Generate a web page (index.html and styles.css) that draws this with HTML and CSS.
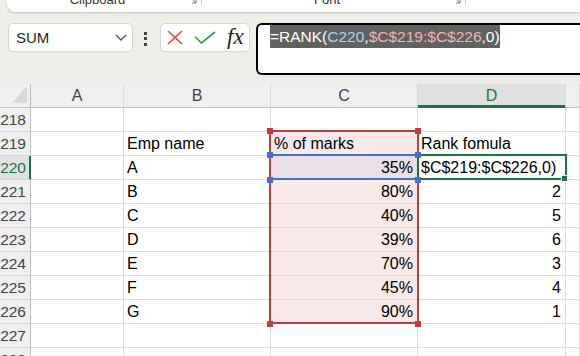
FILE: index.html
```html
<!DOCTYPE html>
<html>
<head>
<meta charset="utf-8">
<link rel="stylesheet" href="styles.css">
</head>
<body>
<div class="ribbon">
  <div class="group g1">
    <span class="glabel">Clipboard</span>
    <svg class="launch" viewBox="0 0 9 9"><polyline points="1,4 1,1 4,1" /><line x1="2.5" y1="2.5" x2="8" y2="8" /><polyline points="8,4 8,8 4,8" /></svg>
  </div>
  <div class="sep"></div>
  <div class="group g2">
    <span class="glabel">Font</span>
    <svg class="launch" viewBox="0 0 9 9"><polyline points="1,4 1,1 4,1" /><line x1="2.5" y1="2.5" x2="8" y2="8" /><polyline points="8,4 8,8 4,8" /></svg>
  </div>
  <div class="sep"></div>
</div>

<div class="fbar">
  <div class="namebox">
    <span>SUM</span>
    <svg class="chev" viewBox="0 0 12 7"><polyline points="1,1 6,6 11,1" /></svg>
  </div>
  <div class="dots"><i></i><i></i><i></i></div>
  <div class="btns">
    <svg class="xicon" viewBox="0 0 16 15"><line x1="1" y1="1" x2="15" y2="14" /><line x1="15" y1="1" x2="1" y2="14" /></svg>
    <svg class="check" viewBox="0 0 22 13"><polyline points="1,5.5 7.5,12 21,1" /></svg>
    <span class="fx">fx</span>
  </div>
  <div class="finput">
    <span class="ftext">=RANK(<span class="ref1">C220</span>,<span class="ref2">$C$219:$C$226</span>,0)</span>
  </div>
</div>

<div class="sheet">
  <div class="ch corner"><svg viewBox="0 0 30 23"><polygon points="12,19 27,19 27,2" /></svg></div>
  <div class="ch">A</div><div class="ch">B</div><div class="ch">C</div><div class="ch chsel">D</div><div class="ch"></div>

  <div class="rh">218</div><div class="c"></div><div class="c"></div><div class="c"></div><div class="c"></div><div class="c"></div>

  <div class="rh">219</div><div class="c"></div><div class="c">Emp name</div><div class="c pink">% of marks</div><div class="c">Rank fomula</div><div class="c"></div>

  <div class="rh rhsel">220</div><div class="c"></div><div class="c">A</div><div class="c lav r">35%</div><div class="c">$C$219:$C$226,0)</div><div class="c"></div>

  <div class="rh">221</div><div class="c"></div><div class="c">B</div><div class="c pink r">80%</div><div class="c r">2</div><div class="c"></div>

  <div class="rh">222</div><div class="c"></div><div class="c">C</div><div class="c pink r">40%</div><div class="c r">5</div><div class="c"></div>

  <div class="rh">223</div><div class="c"></div><div class="c">D</div><div class="c pink r">39%</div><div class="c r">6</div><div class="c"></div>

  <div class="rh">224</div><div class="c"></div><div class="c">E</div><div class="c pink r">70%</div><div class="c r">3</div><div class="c"></div>

  <div class="rh">225</div><div class="c"></div><div class="c">F</div><div class="c pink r">45%</div><div class="c r">4</div><div class="c"></div>

  <div class="rh">226</div><div class="c"></div><div class="c">G</div><div class="c pink r">90%</div><div class="c r">1</div><div class="c"></div>

  <div class="rh">227</div><div class="c"></div><div class="c"></div><div class="c"></div><div class="c"></div><div class="c"></div>

  <div class="rh">228</div><div class="c"></div><div class="c"></div><div class="c"></div><div class="c"></div><div class="c"></div>

  <div class="range"></div>
  <div class="refbox"></div>
  <div class="active"></div>

  <div class="hd red h-tl"></div>
  <div class="hd red h-tr"></div>
  <div class="hd red h-bl"></div>
  <div class="hd red h-br"></div>
  <div class="hd blue b-tl"></div>
  <div class="hd blue b-tr"></div>
  <div class="hd blue b-bl"></div>
  <div class="hd blue b-br"></div>
  <div class="hd green g-br"></div>
</div>
</body>
</html>
```

FILE: styles.css
```css
* { box-sizing: border-box; }
html, body { margin: 0; padding: 0; }
body {
  width: 580px;
  height: 356px;
  overflow: hidden;
  background: #eeeee9;
  font-family: "Liberation Sans", Arial, sans-serif;
}

/* ribbon remnant */
.ribbon {
  display: flex;
  height: 12px;
  margin-left: 7px;
  background: #fff;
  border-radius: 0 0 0 8px;
  box-shadow: 0 1px 2px rgba(0, 0, 0, 0.18);
  overflow: hidden;
}
.group { display: flex; align-items: flex-start; }
.g1 { width: 194px; }
.g2 { width: 263px; }
.glabel {
  flex: 1;
  text-align: center;
  font-size: 13px;
  line-height: 13px;
  margin-top: -7px;
  color: #333;
  white-space: nowrap;
}
.launch {
  width: 9px;
  height: 9px;
  margin-top: -5px;
  margin-right: 4px;
  fill: none;
  stroke: #777;
  stroke-width: 1;
}
.sep { width: 1px; height: 5px; background: #c8c8c8; }

/* formula bar */
.fbar {
  display: flex;
  align-items: flex-start;
  margin: 11px 0 0 8px;
}
.namebox {
  width: 125px;
  height: 29px;
  background: #fff;
  border: 1px solid #d6d6d6;
  border-radius: 5px;
  display: flex;
  align-items: center;
  justify-content: space-between;
  padding: 0 5px 0 7px;
  font-size: 15px;
  color: #1f1f1f;
}
.chev {
  width: 12px;
  height: 7px;
  fill: none;
  stroke: #555;
  stroke-width: 1.3;
}
.dots {
  display: flex;
  flex-direction: column;
  gap: 2.5px;
  margin: 8.5px 0 0 11px;
}
.dots i { display: block; width: 3px; height: 3px; background: #444; }
.btns {
  width: 90px;
  height: 29px;
  margin-left: 13px;
  background: #fff;
  border: 1px solid #d6d6d6;
  border-radius: 5px;
  display: flex;
  align-items: center;
  padding-left: 6px;
}
.xicon {
  width: 16px;
  height: 15px;
  fill: none;
  stroke: #e5484d;
  stroke-width: 1.7;
}
.check {
  width: 22px;
  height: 13px;
  margin-left: 11px;
  fill: none;
  stroke: #3a9a50;
  stroke-width: 1.7;
}
.fx {
  margin-left: 11px;
  font-family: "Liberation Serif", "Times New Roman", serif;
  font-style: italic;
  font-size: 23px;
  line-height: 22px;
  color: #222;
  margin-top: -2px;
}
.finput {
  flex: 1;
  margin-left: 6px;
  height: 52px;
  background: #fff;
  border: 2px solid #000;
  border-right: 0;
  border-radius: 6px 0 0 6px;
  padding-left: 12px;
}
.ftext {
  display: inline-block;
  background: #616161;
  color: #fff;
  font-size: 15.5px;
  line-height: 23px;
  white-space: nowrap;
}
.ref1 { color: #a9d3f2; }
.ref2 { color: #f2b3b3; }

/* sheet */
.sheet {
  position: relative;
  margin-top: 9px;
  display: grid;
  grid-template-columns: 31px 93px 147px 147px 148px 14px;
  grid-auto-rows: 24px;
}
.ch, .rh, .c {
  border-right: 1px solid #dadada;
  border-bottom: 1px solid #dadada;
  font-size: 16px;
  line-height: 23px;
  white-space: nowrap;
}
.ch {
  background: #efefef;
  border-bottom-color: #c2c2c2;
  text-align: center;
  color: #444;
}
.corner { border-right-color: #bdbdbd; }
.corner svg { display: block; width: 30px; height: 23px; fill: #d9d9d9; }
.chsel {
  background: #e0e0e0;
  color: #1e7145;
  border-bottom-color: #1e7145;
  box-shadow: inset 0 -2px 0 #1e7145;
}
.rh {
  background: #efefef;
  border-right-color: #bdbdbd;
  border-bottom-color: #d6d6d6;
  text-align: right;
  padding-right: 4px;
  font-size: 15.5px;
  color: #444;
}
.rhsel {
  background: #e1e1e1;
  color: #1e7145;
  border-right-color: #1e7145;
  box-shadow: inset -1px 0 0 #1e7145;
}
.c {
  background: #fff;
  padding: 0 3px;
  color: #000;
}
.c.r { text-align: right; padding-right: 4px; }
.c.pink { background: #f8e9e9; }
.c.lav { background: #e8dfe8; }

/* reference highlights overlaid on the grid */
.range {
  position: absolute;
  left: 269px;
  top: 46px;
  width: 150px;
  height: 194px;
  border: 2px solid #c23b41;
}
.refbox {
  position: absolute;
  left: 271px;
  top: 70px;
  width: 146px;
  height: 26px;
  border-top: 2px solid #4472c4;
  border-bottom: 2px solid #4472c4;
}
.active {
  position: absolute;
  left: 417px;
  top: 70px;
  width: 150px;
  height: 26px;
  border: 2px solid #1e7145;
}
.hd { position: absolute; width: 6px; height: 6px; }
.hd.red { background: #c23b41; }
.hd.blue { background: #4472c4; }
.hd.green { background: #1e7145; width: 5px; height: 5px; outline: 1px solid #fff; }
.h-tl { left: 267px; top: 44px; }
.h-tr { left: 415px; top: 44px; }
.h-bl { left: 267px; top: 237px; }
.h-br { left: 415px; top: 237px; }
.b-tl { left: 267px; top: 68px; }
.b-tr { left: 415px; top: 68px; }
.b-bl { left: 267px; top: 93px; }
.b-br { left: 415px; top: 93px; }
.g-br { left: 562px; top: 92px; }
```
